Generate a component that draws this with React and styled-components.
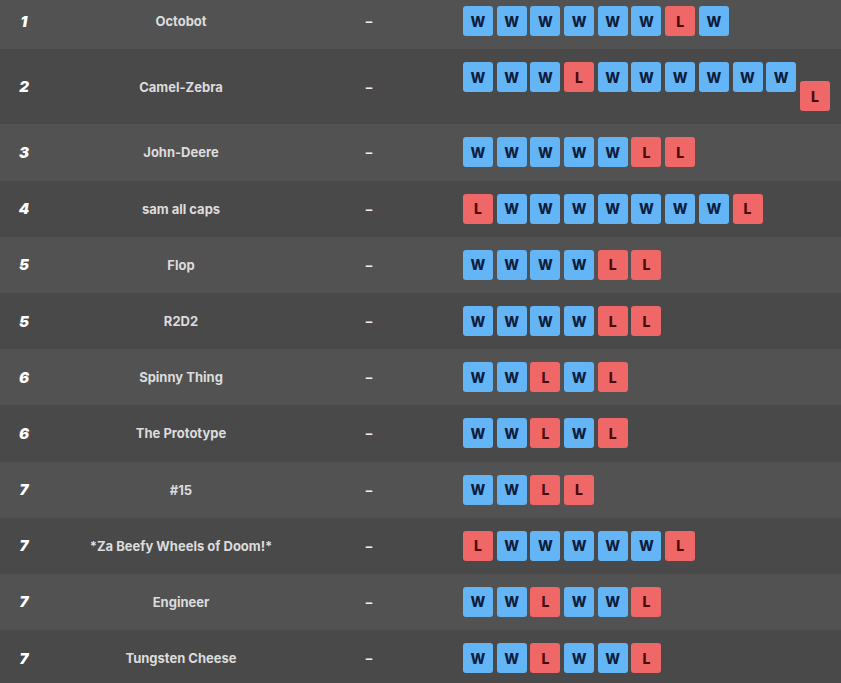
import React from "react";
import styled, { createGlobalStyle } from "styled-components";

const GlobalStyle = createGlobalStyle`
  html, body {
    margin: 0;
    padding: 0;
    background: #4a4a4a;
    overflow: hidden;
  }
  body {
    font-family: Inter, "Liberation Sans", sans-serif;
  }
`;

const standings = [
  { rank: 1, name: "Octobot", results: "WWWWWWLW" },
  { rank: 2, name: "Camel-Zebra", results: "WWWLWWWWWWL", dropLast: true },
  { rank: 3, name: "John-Deere", results: "WWWWWLL" },
  { rank: 4, name: "sam all caps", results: "LWWWWWWWL" },
  { rank: 5, name: "Flop", results: "WWWWLL" },
  { rank: 5, name: "R2D2", results: "WWWWLL" },
  { rank: 6, name: "Spinny Thing", results: "WWLWL" },
  { rank: 6, name: "The Prototype", results: "WWLWL" },
  { rank: 7, name: "#15", results: "WWLL" },
  { rank: 7, name: "*Za Beefy Wheels of Doom!*", results: "LWWWWWL" },
  { rank: 7, name: "Engineer", results: "WWLWWL" },
  { rank: 7, name: "Tungsten Cheese", results: "WWLWWL" },
];

const Table = styled.div`
  margin-top: -7px;
  display: flex;
  flex-direction: column;
`;

const Row = styled.div`
  display: grid;
  grid-template-columns: 48px 266px 110px 1fr;
  align-items: center;
  padding: 13.1px 0;
  background: ${(p) => (p.$odd ? "#525252" : "#494949")};
`;

const Rank = styled.div`
  text-align: center;
  color: #ffffff;
  font-size: 15px;
  font-weight: 900;
  font-style: italic;
`;

const Name = styled.div`
  text-align: center;
  color: #dcdcdc;
  font-size: 13px;
  font-weight: 700;
`;

const Dash = styled.div`
  text-align: center;
  color: #eeeeee;
  font-size: 13px;
  font-weight: 700;
`;

const Strip = styled.div`
  display: flex;
  align-items: flex-start;
  gap: 3.7px;
  padding-left: 39px;
`;

const Badge = styled.div`
  width: 30px;
  height: 30px;
  flex: none;
  border-radius: 3px;
  display: flex;
  align-items: center;
  justify-content: center;
  font-size: 14px;
  font-weight: 800;
  background: ${(p) => (p.$win ? "#64b5f6" : "#f06767")};
  color: ${(p) => (p.$win ? "#0e1d3d" : "#4a0b0b")};
  margin-top: ${(p) => (p.$drop ? "19px" : "0")};
`;

export default function App() {
  return (
    <>
      <GlobalStyle />
      <Table>
        {standings.map((s, i) => (
          <Row key={i} $odd={i % 2 === 0}>
            <Rank>{s.rank}</Rank>
            <Name>{s.name}</Name>
            <Dash>–</Dash>
            <Strip>
              {s.results.split("").map((r, j) => (
                <Badge
                  key={j}
                  $win={r === "W"}
                  $drop={s.dropLast && j === s.results.length - 1}
                >
                  {r}
                </Badge>
              ))}
            </Strip>
          </Row>
        ))}
      </Table>
    </>
  );
}
